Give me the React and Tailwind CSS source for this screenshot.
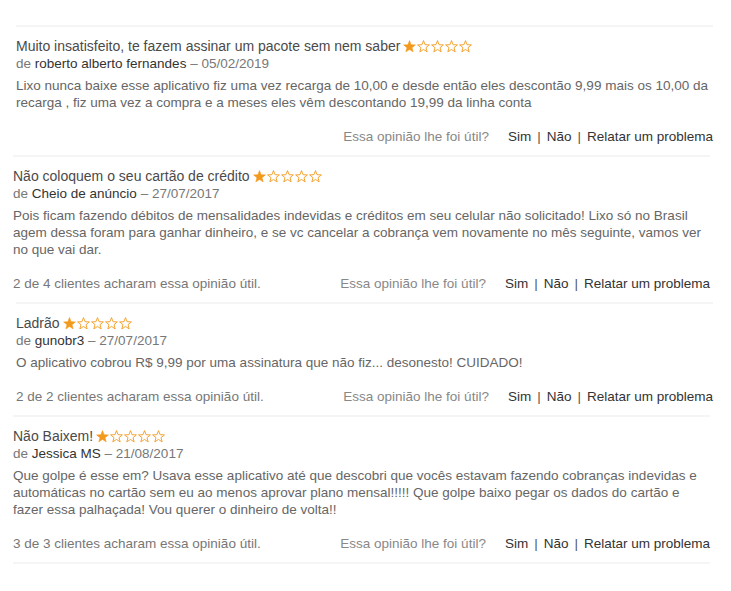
import React from 'react';

const reviews = [
  {
    offset: 'ml-[16px]',
    title: 'Muito insatisfeito, te fazem assinar um pacote sem nem saber',
    author: 'roberto alberto fernandes',
    date: '05/02/2019',
    body: [
      'Lixo nunca baixe esse aplicativo fiz uma vez recarga de 10,00 e desde então eles descontão 9,99 mais os 10,00 da',
      'recarga , fiz uma vez a compra e a meses eles vêm descontando 19,99 da linha conta',
    ],
    helpful: null,
  },
  {
    offset: 'ml-[13px]',
    title: 'Não coloquem o seu cartão de crédito',
    author: 'Cheio de anúncio',
    date: '27/07/2017',
    body: [
      'Pois ficam fazendo débitos de mensalidades indevidas e créditos em seu celular não solicitado! Lixo só no Brasil',
      'agem dessa foram para ganhar dinheiro, e se vc cancelar a cobrança vem novamente no mês seguinte, vamos ver',
      'no que vai dar.',
    ],
    helpful: '2 de 4 clientes acharam essa opinião útil.',
  },
  {
    offset: 'ml-[16px]',
    title: 'Ladrão',
    author: 'gunobr3',
    date: '27/07/2017',
    body: ['O aplicativo cobrou R$ 9,99 por uma assinatura que não fiz... desonesto! CUIDADO!'],
    helpful: '2 de 2 clientes acharam essa opinião útil.',
  },
  {
    offset: 'ml-[13px]',
    title: 'Não Baixem!',
    author: 'Jessica MS',
    date: '21/08/2017',
    body: [
      'Que golpe é esse em? Usava esse aplicativo até que descobri que vocês estavam fazendo cobranças indevidas e',
      'automáticas no cartão sem eu ao menos aprovar plano mensal!!!!! Que golpe baixo pegar os dados do cartão e',
      'fazer essa palhaçada! Vou querer o dinheiro de volta!!',
    ],
    helpful: '3 de 3 clientes acharam essa opinião útil.',
    last: true,
  },
];

const STAR = 'M6.5 0.6l1.55 4.1 4.35.2-3.4 2.75 1.17 4.2L6.5 9.45 2.83 11.85 4 7.65.6 4.9l4.35-.2z';

const Stars = () => (
  <span className="ml-[3px] flex gap-[1px]">
    {[0, 1, 2, 3, 4].map((i) => (
      <svg key={i} width="13" height="13" viewBox="0 0 13 13">
        <path
          d={STAR}
          fill={i === 0 ? '#f39a1e' : 'none'}
          stroke="#f39a1e"
          strokeWidth={i === 0 ? 0.6 : 0.9}
          strokeLinejoin="round"
        />
      </svg>
    ))}
  </span>
);

const Review = ({ r }) => (
  <div
    className={`${r.offset} w-[697px] border-t-2 border-[#f5f5f5] pt-[11px] pb-[10px] ${
      r.last ? 'border-b-2' : ''
    }`}
  >
    <div className="h-[17px] leading-[17px] text-[14px] text-[#4a4a4a] flex items-center whitespace-nowrap">
      {r.title}
      <Stars />
    </div>
    <div className="h-[17px] leading-[17px] text-[#777] whitespace-nowrap">
      de <span className="text-[#333]">{r.author}</span> – {r.date}
    </div>
    <div className="mt-[5px] text-[#666]">
      {r.body.map((line) => (
        <div key={line} className="h-[17px] leading-[17px] whitespace-nowrap">
          {line}
        </div>
      ))}
    </div>
    <div className="mt-[17px] h-[17px] leading-[17px] flex justify-between whitespace-nowrap">
      <span className="text-[#777]">{r.helpful}</span>
      <span className="flex">
        <span className="text-[#888] mr-[19px]">Essa opinião lhe foi útil?</span>
        <span className="text-[#333]">Sim</span>
        <span className="text-[#555] mx-[6px]">|</span>
        <span className="text-[#333]">Não</span>
        <span className="text-[#555] mx-[6px]">|</span>
        <span className="text-[#333]">Relatar um problema</span>
      </span>
    </div>
  </div>
);

export default function App() {
  return (
    <div className="w-[731px] h-[591px] bg-white pt-[25px] overflow-hidden text-[13.5px] font-['Liberation_Sans',Arial,sans-serif]">
      {reviews.map((r) => (
        <Review key={r.title} r={r} />
      ))}
    </div>
  );
}
